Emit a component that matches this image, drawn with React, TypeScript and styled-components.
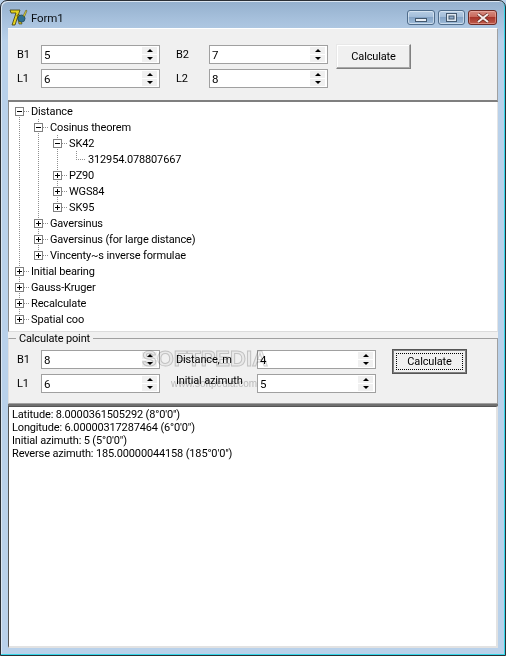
import React from 'react'
import styled, { createGlobalStyle } from 'styled-components'

const GlobalStyle = createGlobalStyle`
  html, body {
    margin: 0;
    padding: 0;
    overflow: hidden;
    background: #b9d1ea;
  }
  * {
    box-sizing: border-box;
  }
`

const Window = styled.div`
  width: 506px;
  height: 656px;
  display: flex;
  flex-direction: column;
  border: 1px solid #2a2f35;
  border-radius: 7px 7px 0 0;
  box-shadow: inset -1px -1px 0 #35d6e8, inset 1px 1px 0 #dbe6f1;
  background: linear-gradient(to bottom, #94b0cd 0, #a6c0dc 18px, #b9d1ea 40px, #b9d1ea 100%);
  font-family: Roboto, 'Liberation Sans', Arial, sans-serif;
  font-size: 11px;
  letter-spacing: -0.15px;
  color: #000;
`

const TitleBar = styled.div`
  height: 27px;
  flex: none;
  display: flex;
  align-items: flex-start;
  padding: 7px 8px 0 8px;
`

const TitleText = styled.span`
  font-size: 11.5px;
  line-height: 20px;
  margin-left: 3px;
  color: #0a0f14;
`

const CaptionButtons = styled.div`
  margin-left: auto;
  margin-top: 2px;
  display: flex;
  gap: 3px;
`

const CaptionButton = styled.div<{ $close?: boolean; $w: number; $low?: boolean }>`
  width: ${({ $w }) => $w}px;
  height: 15px;
  display: flex;
  align-items: ${({ $low }) => ($low ? 'flex-end' : 'center')};
  padding-bottom: ${({ $low }) => ($low ? 2 : 0)}px;
  justify-content: center;
  border: 1px solid ${({ $close }) => ($close ? '#6d2a24' : '#4f6c8b')};
  border-radius: 3px;
  box-shadow: inset 0 0 0 1px ${({ $close }) => ($close ? 'rgba(255,200,190,.45)' : 'rgba(235,243,250,.6)')};
  background: ${({ $close }) =>
    $close
      ? 'linear-gradient(to bottom, #d58b80 0, #c9695c 45%, #a8352a 50%, #bd5b4c 100%)'
      : 'linear-gradient(to bottom, #b6cde4 0, #a3bdd9 45%, #86a5c7 50%, #9dbad8 100%)'};
`

const Client = styled.div`
  flex: 1;
  min-height: 0;
  margin: 0 7px 7px 7px;
  display: flex;
  flex-direction: column;
  background: #f0f0f0;
`

const TopPanel = styled.div`
  height: 74px;
  flex: none;
  border-top: 1px solid #fff;
  border-bottom: 2px solid #7f7f7f;
  border-right: 1px solid #a0a0a0;
  padding: 16px 0 0 9px;
  display: grid;
  grid-template-columns: 24px 119px 16px 33px 119px 8px 75px;
  grid-template-rows: 19px 19px;
  row-gap: 5px;
  align-items: center;
`

const FieldLabel = styled.span<{ $col: number; $raised?: boolean }>`
  grid-column: ${({ $col }) => $col};
  white-space: nowrap;
  padding-bottom: ${({ $raised }) => ($raised ? 6 : 0)}px;
`

const Spin = styled.div<{ $col: number }>`
  grid-column: ${({ $col }) => $col};
  height: 19px;
  display: flex;
  align-items: center;
  border: 1px solid #a0a0a0;
  background: #fff;
  padding: 0 1px 0 2px;
  font-size: 11.5px;
`

const SpinValue = styled.span`
  flex: 1;
`

const SpinArrows = styled.div`
  width: 15px;
  height: 15px;
  display: flex;
  flex-direction: column;
  gap: 1px;
  margin-right: 1px;
`

const SpinArrow = styled.div<{ $down?: boolean }>`
  flex: 1;
  background: #f0f0f0;
  display: flex;
  align-items: center;
  justify-content: center;
  &::after {
    content: '';
    width: 0;
    height: 0;
    border-left: 3px solid transparent;
    border-right: 3px solid transparent;
    ${({ $down }) => ($down ? 'border-top: 3px solid #000;' : 'border-bottom: 3px solid #000;')}
  }
`

const Button = styled.div<{ $focused?: boolean; $col: number }>`
  grid-column: ${({ $col }) => $col};
  grid-row: 1;
  align-self: start;
  margin-top: -1px;
  height: 25px;
  display: flex;
  align-items: center;
  justify-content: center;
  background: #f0f0f0;
  border: ${({ $focused }) => ($focused ? '1px solid #555' : '1px solid #e8e8e8')};
  border-right-color: ${({ $focused }) => ($focused ? '#555' : '#808080')};
  border-bottom-color: ${({ $focused }) => ($focused ? '#555' : '#808080')};
  box-shadow: ${({ $focused }) =>
    $focused ? 'inset 0 0 0 1px #808080' : 'inset -1px -1px 0 #a8a8a8, inset 1px 1px 0 #fff'};
  outline: ${({ $focused }) => ($focused ? '1px dotted #000' : 'none')};
  outline-offset: -5px;
`

const Tree = styled.div`
  height: 230px;
  flex: none;
  background: #fff;
  border-bottom: 1px solid #dcdcdc;
  border-right: 1px solid #e4e4e4;
  border-left: 1px solid #8a8a8a;
  padding: 1px 0 0 0;
`

const TreeRow = styled.div`
  height: 16px;
  display: flex;
  align-items: center;
  padding-left: 1px;
`

const dots = 'repeating-linear-gradient(to bottom, #8f8f8f 0 1px, transparent 1px 2px)'
const dotsAcross = 'repeating-linear-gradient(to right, #8f8f8f 0 1px, transparent 1px 2px)'

// vertical dotted guide of a tree column, full height or only the half that joins the box
type Span = 'full' | 'top' | 'bottom'

const spanBackground = (span?: Span) => {
  if (span === 'full') return `${dots} 9px 0 / 1px 16px no-repeat`
  if (span === 'top') return `${dots} 9px 0 / 1px 8px no-repeat`
  if (span === 'bottom') return `${dots} 9px 8px / 1px 8px no-repeat`
  return 'none'
}

const TreeCell = styled.div<{ $span?: Span; $stub?: boolean }>`
  width: 19px;
  height: 16px;
  flex: none;
  display: flex;
  align-items: center;
  padding-left: 5px;
  background: ${({ $span }) => spanBackground($span)}
    ${({ $stub }) => ($stub ? `, ${dotsAcross} 14px 8px / 5px 1px no-repeat` : '')};
`

const Elbow = styled.div`
  width: 19px;
  height: 16px;
  flex: none;
  margin-right: 2px;
  background:
    ${dots} 9px 0 / 1px 8px no-repeat,
    ${dotsAcross} 9px 8px / 9px 1px no-repeat;
`

const TreeLabel = styled.span`
  white-space: nowrap;
  margin-left: 2px;
`

const LeafLabel = styled.span`
  white-space: nowrap;
`

const Group = styled.div`
  height: 74px;
  flex: none;
  border-bottom: 2px solid #6f6f6f;
  position: relative;
`

const Frame = styled.fieldset`
  margin: 0;
  min-width: 0;
  height: 72px;
  border: 1px solid #a0a0a0;
  border-left-color: #e0e0e0;
  padding: 5px 0 0 8px;
  display: grid;
  grid-template-columns: 24px 119px 16px 81px 119px 16px 75px;
  grid-template-rows: 19px 19px;
  row-gap: 5px;
  align-items: center;
`

const Legend = styled.legend`
  margin-left: -1px;
  padding: 0 3px;
  line-height: 13px;
`

const Watermark = styled.div`
  position: absolute;
  left: 134px;
  top: 15px;
  pointer-events: none;
  font-family: 'Liberation Sans', Arial, sans-serif;
  font-size: 22px;
  line-height: 24px;
  font-weight: bold;
  letter-spacing: 0;
  color: #f8f8f8;
  -webkit-text-stroke: 1px #cfcfcf;
  mix-blend-mode: multiply;
  white-space: nowrap;
`

const WatermarkUrl = styled.div`
  font-size: 10px;
  line-height: 12px;
  font-weight: normal;
  margin: 7px 0 0 29px;
  -webkit-text-stroke: 0;
  color: #c8c8c8;
`

const Memo = styled.div`
  flex: 1;
  min-height: 0;
  background: #fff;
  border-left: 1px solid #555;
  border-top: 1px solid #555;
  border-right: 2px solid #e2e2e2;
  border-bottom: 2px solid #e2e2e2;
  padding: 1px 0 0 3px;
  line-height: 13px;
`

const MemoLine = styled.div`
  white-space: nowrap;
`

function FormIcon() {
  return (
    <svg width="19" height="18" viewBox="0 0 19 18">
      <path d="M1 2h10l-1 3-4 12H3l4-12H2z" fill="#e6d21c" stroke="#3c3a10" strokeWidth="0.8" />
      <path d="M8 7l2 9h3l-2-9z" fill="#c9b81a" stroke="#3c3a10" strokeWidth="0.6" />
      <circle cx="12.5" cy="10.5" r="3.6" fill="#2f6f8f" stroke="#16384a" strokeWidth="0.6" />
      <path d="M14 8l3-6 1 .8-2.6 6z" fill="#f0e030" stroke="#3c3a10" strokeWidth="0.5" />
    </svg>
  )
}

function Expander({ open }: { open?: boolean }) {
  return (
    <svg width="9" height="9" viewBox="0 0 9 9" shapeRendering="crispEdges">
      <rect x="0.5" y="0.5" width="8" height="8" fill="#fff" stroke="#808080" />
      <path d="M2 4.5h5" stroke="#000" />
      {!open && <path d="M4.5 2v5" stroke="#000" />}
    </svg>
  )
}

function SpinEdit({ col, value }: { col: number; value: string }) {
  return (
    <Spin $col={col}>
      <SpinValue>{value}</SpinValue>
      <SpinArrows>
        <SpinArrow />
        <SpinArrow $down />
      </SpinArrows>
    </Spin>
  )
}

function Node({ level, label, open, span = 'full' }: { level: number; label: string; open?: boolean; span?: Span }) {
  return (
    <TreeRow>
      {Array.from({ length: level }).map((_, i) => (
        <TreeCell key={i} $span="full" />
      ))}
      <TreeCell $span={span} $stub>
        <Expander open={open} />
      </TreeCell>
      <TreeLabel>{label}</TreeLabel>
    </TreeRow>
  )
}

export default function App() {
  return (
    <>
      <GlobalStyle />
      <Window>
        <TitleBar>
          <FormIcon />
          <TitleText>Form1</TitleText>
          <CaptionButtons>
            <CaptionButton $w={28} $low>
              <svg width="12" height="4" viewBox="0 0 12 4">
                <rect x="0.5" y="0.5" width="11" height="3" fill="#e8eef5" stroke="#43586e" />
              </svg>
            </CaptionButton>
            <CaptionButton $w={27}>
              <svg width="11" height="9" viewBox="0 0 11 9">
                <rect x="0.5" y="0.5" width="10" height="8" fill="#dfe8f1" stroke="#43586e" />
                <rect x="3" y="3" width="5" height="3" fill="#8fabca" stroke="#43586e" strokeWidth="1" />
              </svg>
            </CaptionButton>
            <CaptionButton $w={29} $close>
              <svg width="14" height="10" viewBox="0 0 14 10">
                <path d="M2 1l10 8M12 1L2 9" stroke="#5d2018" strokeWidth="3.4" />
                <path d="M2 1l10 8M12 1L2 9" stroke="#f6ecea" strokeWidth="2.2" />
              </svg>
            </CaptionButton>
          </CaptionButtons>
        </TitleBar>
        <Client>
          <TopPanel>
            <FieldLabel $col={1}>B1</FieldLabel>
            <SpinEdit col={2} value="5" />
            <FieldLabel $col={4}>B2</FieldLabel>
            <SpinEdit col={5} value="7" />
            <Button $col={7}>Calculate</Button>
            <FieldLabel $col={1}>L1</FieldLabel>
            <SpinEdit col={2} value="6" />
            <FieldLabel $col={4}>L2</FieldLabel>
            <SpinEdit col={5} value="8" />
          </TopPanel>
          <Tree>
            <Node level={0} label="Distance" open span="bottom" />
            <Node level={1} label="Cosinus theorem" open />
            <Node level={2} label="SK42" open />
            <TreeRow>
              <TreeCell $span="full" />
              <TreeCell $span="full" />
              <TreeCell $span="full" />
              <Elbow />
              <LeafLabel>312954.078807667</LeafLabel>
            </TreeRow>
            <Node level={2} label="PZ90" />
            <Node level={2} label="WGS84" />
            <Node level={2} label="SK95" span="top" />
            <Node level={1} label="Gaversinus" />
            <Node level={1} label="Gaversinus (for large distance)" />
            <Node level={1} label="Vincenty~s inverse formulae" span="top" />
            <Node level={0} label="Initial bearing" />
            <Node level={0} label="Gauss-Kruger" />
            <Node level={0} label="Recalculate" />
            <Node level={0} label="Spatial coo" span="top" />
          </Tree>
          <Group>
            <Frame>
              <Legend>Calculate point</Legend>
              <FieldLabel $col={1}>B1</FieldLabel>
              <SpinEdit col={2} value="8" />
              <FieldLabel $col={4}>Distance, m</FieldLabel>
              <SpinEdit col={5} value="4" />
              <Button $col={7} $focused>Calculate</Button>
              <FieldLabel $col={1}>L1</FieldLabel>
              <SpinEdit col={2} value="6" />
              <FieldLabel $col={4} $raised>Initial azimuth</FieldLabel>
              <SpinEdit col={5} value="5" />
            </Frame>
            <Watermark>
              SOFTPEDIA
              <WatermarkUrl>www.softpedia.com</WatermarkUrl>
            </Watermark>
          </Group>
          <Memo>
            <MemoLine>Latitude: 8.0000361505292 (8°0'0")</MemoLine>
            <MemoLine>Longitude: 6.00000317287464 (6°0'0")</MemoLine>
            <MemoLine>Initial azimuth: 5 (5°0'0")</MemoLine>
            <MemoLine>Reverse azimuth: 185.00000044158 (185°0'0")</MemoLine>
          </Memo>
        </Client>
      </Window>
    </>
  )
}
